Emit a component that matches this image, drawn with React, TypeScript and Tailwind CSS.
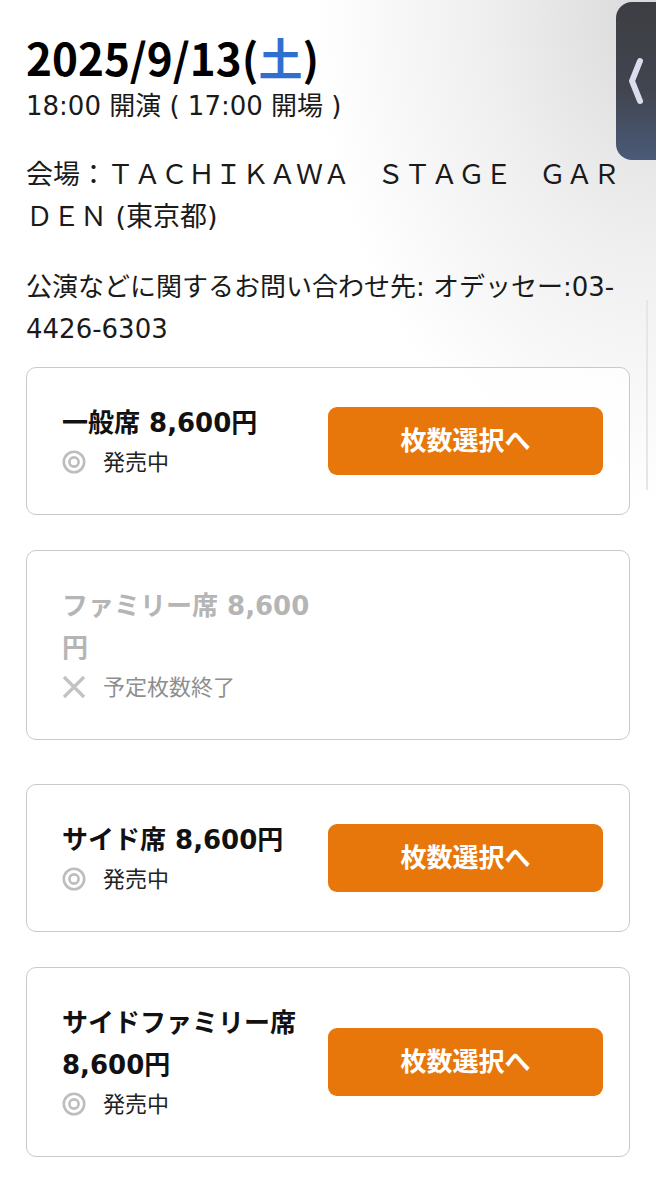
import type { ReactNode } from "react";

const BODY_FONT = "font-['DejaVu_Sans','Noto_Sans_CJK_JP',sans-serif]";
const TITLE_FONT = "font-['Noto_Sans_CJK_JP','Liberation_Sans',sans-serif]";

type Seat = {
  name: ReactNode;
  onSale: boolean;
  gapClass: string;
};

const SEATS: Seat[] = [
  { name: "一般席 8,600円", onSale: true, gapClass: "mt-[17px]" },
  { name: "ファミリー席 8,600円", onSale: false, gapClass: "mt-[35px]" },
  { name: "サイド席 8,600円", onSale: true, gapClass: "mt-[44px]" },
  { name: "サイドファミリー席 8,600円", onSale: true, gapClass: "mt-[35px]" },
];

function OnSaleIcon() {
  return (
    <svg width="24" height="24" viewBox="0 0 24 24" fill="none" stroke="#bdbdbd" strokeWidth="2.6">
      <circle cx="12" cy="12" r="10.2" />
      <circle cx="12" cy="12" r="4.6" />
    </svg>
  );
}

function SoldOutIcon() {
  return (
    <svg width="24" height="24" viewBox="0 0 24 24" fill="none" stroke="#c2c2c2" strokeWidth="3.2" strokeLinecap="butt">
      <path d="M2 2 L22 22 M22 2 L2 22" />
    </svg>
  );
}

function SeatCard({ seat }: { seat: Seat }) {
  return (
    <div className={`${seat.gapClass} flex items-center rounded-[10px] border border-[#c9c9c9] bg-white/80 py-[34px] pl-[35px] pr-[26px]`}>
      <div className="w-[262px]">
        <p className={`text-[26px] font-bold leading-[42px] ${seat.onSale ? "text-[#111]" : "text-[#b5b5b5]"}`}>{seat.name}</p>
        <div className="flex h-[36px] items-center gap-[17px]">
          {seat.onSale ? <OnSaleIcon /> : <SoldOutIcon />}
          <span className={`text-[22px] ${seat.onSale ? "text-[#222]" : "text-[#8e8e8e]"}`}>{seat.onSale ? "発売中" : "予定枚数終了"}</span>
        </div>
      </div>
      {seat.onSale ? (
        <button className="ml-auto flex h-[68px] w-[275px] items-center justify-center rounded-[9px] bg-[#e8770b] text-[26px] font-bold text-white">
          枚数選択へ
        </button>
      ) : null}
    </div>
  );
}

export default function App() {
  return (
    <div className={`${BODY_FONT} relative min-h-[1200px] overflow-hidden bg-[radial-gradient(ellipse_380px_560px_at_100%_0%,#d9d9d9_0%,#efefef_45%,#ffffff_90%)] text-[#1a1a1a]`}>
      <div className="px-[26px] pb-10 pt-[31px]">
        <h1 className={`${TITLE_FONT} text-[44px] font-bold leading-[52px] text-black`}>
          2025/9/13(<span className="text-[#2f6fd0]">土</span>)
        </h1>
        <p className="mt-[2px] text-[26px] leading-[42px]">18:00 開演 ( 17:00 開場 )</p>
        <p className="mt-[27px] w-[604px] text-[27px] leading-[42px]">会場：ＴＡＣＨＩＫＡＷＡ　ＳＴＡＧＥ　ＧＡＲＤＥＮ (東京都)</p>
        <p className="mt-[28px] w-[604px] text-[26px] leading-[42px]">公演などに関するお問い合わせ先: オデッセー:03-4426-6303</p>

        {SEATS.map((seat, i) => (
          <SeatCard key={i} seat={seat} />
        ))}
      </div>

      {/* side tab */}
      <div className="absolute right-0 top-[2px] flex h-[158px] w-[40px] items-center justify-center rounded-l-[16px] bg-[linear-gradient(180deg,#3d3e43_0%,#41454f_55%,#4a5a78_100%)]">
        <svg width="20" height="50" viewBox="0 0 20 50" fill="none" stroke="#dcdcee" strokeWidth="6" strokeLinecap="round" strokeLinejoin="round">
          <path d="M14 5 L6 25 L14 45" />
        </svg>
      </div>
      {/* scroll indicator */}
      <div className="absolute right-[8px] top-[300px] h-[190px] w-[2px] bg-[#e6e6e6]" />
    </div>
  );
}
